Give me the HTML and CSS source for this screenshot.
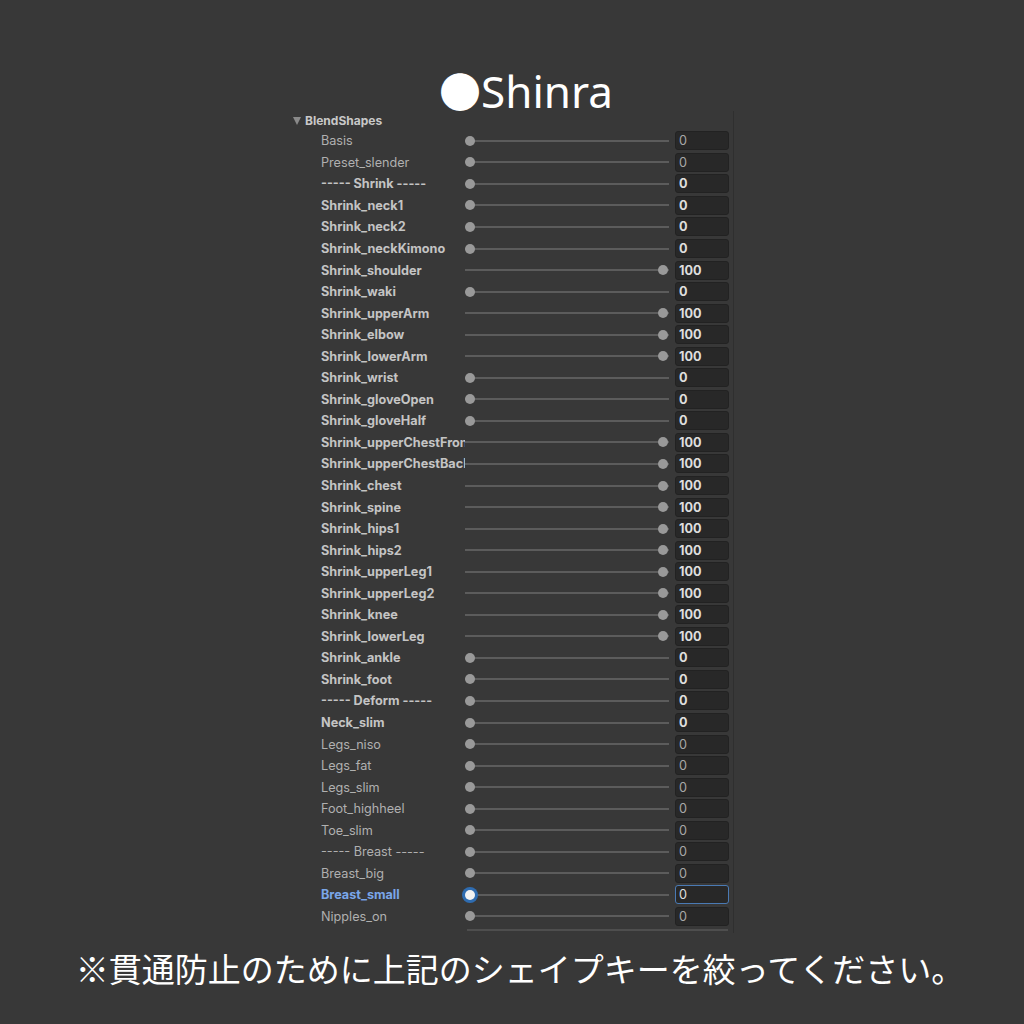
FILE: index.html
```html
<!DOCTYPE html>
<html lang="ja">
<head>
    <meta charset="UTF-8">
    <title>Shinra BlendShapes</title>
    <link rel="stylesheet" href="styles.css">
</head>
<body>
    <h1 class="title"><span class="dot">●</span>Shinra</h1>

    <div class="inspector">
        <div class="foldout"><span class="arrow"></span>BlendShapes</div>

        <div class="row"><span class="name">Basis</span><span class="slider"><span class="thumb"></span></span><span class="field">0</span></div>
        <div class="row"><span class="name">Preset_slender</span><span class="slider"><span class="thumb"></span></span><span class="field">0</span></div>
        <div class="row bold"><span class="name">----- Shrink -----</span><span class="slider"><span class="thumb"></span></span><span class="field">0</span></div>
        <div class="row bold"><span class="name">Shrink_neck1</span><span class="slider"><span class="thumb"></span></span><span class="field">0</span></div>
        <div class="row bold"><span class="name">Shrink_neck2</span><span class="slider"><span class="thumb"></span></span><span class="field">0</span></div>
        <div class="row bold"><span class="name">Shrink_neckKimono</span><span class="slider"><span class="thumb"></span></span><span class="field">0</span></div>
        <div class="row bold"><span class="name">Shrink_shoulder</span><span class="slider max"><span class="thumb"></span></span><span class="field">100</span></div>
        <div class="row bold"><span class="name">Shrink_waki</span><span class="slider"><span class="thumb"></span></span><span class="field">0</span></div>
        <div class="row bold"><span class="name">Shrink_upperArm</span><span class="slider max"><span class="thumb"></span></span><span class="field">100</span></div>
        <div class="row bold"><span class="name">Shrink_elbow</span><span class="slider max"><span class="thumb"></span></span><span class="field">100</span></div>
        <div class="row bold"><span class="name">Shrink_lowerArm</span><span class="slider max"><span class="thumb"></span></span><span class="field">100</span></div>
        <div class="row bold"><span class="name">Shrink_wrist</span><span class="slider"><span class="thumb"></span></span><span class="field">0</span></div>
        <div class="row bold"><span class="name">Shrink_gloveOpen</span><span class="slider"><span class="thumb"></span></span><span class="field">0</span></div>
        <div class="row bold"><span class="name">Shrink_gloveHalf</span><span class="slider"><span class="thumb"></span></span><span class="field">0</span></div>
        <div class="row bold"><span class="name">Shrink_upperChestFront</span><span class="slider max"><span class="thumb"></span></span><span class="field">100</span></div>
        <div class="row bold"><span class="name">Shrink_upperChestBack</span><span class="slider max"><span class="thumb"></span></span><span class="field">100</span></div>
        <div class="row bold"><span class="name">Shrink_chest</span><span class="slider max"><span class="thumb"></span></span><span class="field">100</span></div>
        <div class="row bold"><span class="name">Shrink_spine</span><span class="slider max"><span class="thumb"></span></span><span class="field">100</span></div>
        <div class="row bold"><span class="name">Shrink_hips1</span><span class="slider max"><span class="thumb"></span></span><span class="field">100</span></div>
        <div class="row bold"><span class="name">Shrink_hips2</span><span class="slider max"><span class="thumb"></span></span><span class="field">100</span></div>
        <div class="row bold"><span class="name">Shrink_upperLeg1</span><span class="slider max"><span class="thumb"></span></span><span class="field">100</span></div>
        <div class="row bold"><span class="name">Shrink_upperLeg2</span><span class="slider max"><span class="thumb"></span></span><span class="field">100</span></div>
        <div class="row bold"><span class="name">Shrink_knee</span><span class="slider max"><span class="thumb"></span></span><span class="field">100</span></div>
        <div class="row bold"><span class="name">Shrink_lowerLeg</span><span class="slider max"><span class="thumb"></span></span><span class="field">100</span></div>
        <div class="row bold"><span class="name">Shrink_ankle</span><span class="slider"><span class="thumb"></span></span><span class="field">0</span></div>
        <div class="row bold"><span class="name">Shrink_foot</span><span class="slider"><span class="thumb"></span></span><span class="field">0</span></div>
        <div class="row bold"><span class="name">----- Deform -----</span><span class="slider"><span class="thumb"></span></span><span class="field">0</span></div>
        <div class="row bold"><span class="name">Neck_slim</span><span class="slider"><span class="thumb"></span></span><span class="field">0</span></div>
        <div class="row"><span class="name">Legs_niso</span><span class="slider"><span class="thumb"></span></span><span class="field">0</span></div>
        <div class="row"><span class="name">Legs_fat</span><span class="slider"><span class="thumb"></span></span><span class="field">0</span></div>
        <div class="row"><span class="name">Legs_slim</span><span class="slider"><span class="thumb"></span></span><span class="field">0</span></div>
        <div class="row"><span class="name">Foot_highheel</span><span class="slider"><span class="thumb"></span></span><span class="field">0</span></div>
        <div class="row"><span class="name">Toe_slim</span><span class="slider"><span class="thumb"></span></span><span class="field">0</span></div>
        <div class="row"><span class="name">----- Breast -----</span><span class="slider"><span class="thumb"></span></span><span class="field">0</span></div>
        <div class="row"><span class="name">Breast_big</span><span class="slider"><span class="thumb"></span></span><span class="field">0</span></div>
        <div class="row focus"><span class="name">Breast_small</span><span class="slider"><span class="thumb"></span></span><span class="field">0</span></div>
        <div class="row"><span class="name">Nipples_on</span><span class="slider"><span class="thumb"></span></span><span class="field">0</span></div>

        <div class="rule"></div>
    </div>

    <p class="note">※貫通防止のために上記のシェイプキーを絞ってください。</p>
</body>
</html>
```

FILE: styles.css
```css
body { margin: 0; background: #383838; font-family: Inter, "Noto Sans", sans-serif; }
.title { margin: 70px 0 0; padding-left: 28px; height: 41px; line-height: 40px; text-align: center; font-family: "Noto Sans", sans-serif; font-weight: normal; font-size: 44px; color: #fff; }
.title .dot { font-family: "Noto Sans CJK JP", sans-serif; font-size: 42px; }

.inspector { width: 443px; margin: 0 auto; border-right: 1px solid #2f2f2f; padding-bottom: 2px; }
.foldout { display: flex; align-items: center; height: 19px; padding-left: 3px; font-size: 12px; font-weight: bold; color: #c8c8c8; }
.arrow { width: 0; height: 0; margin-right: 4px; border-left: 4.5px solid transparent; border-right: 4.5px solid transparent; border-top: 8px solid #8a8a8a; }

.row { display: flex; align-items: center; height: 21.56px; padding-left: 31px; font-size: 12.65px; color: #b0b0b0; }
.row.bold { font-weight: bold; color: #c4c4c4; }
.name { width: 144px; flex: none; white-space: pre; overflow: hidden; }

.slider { position: relative; width: 204px; height: 2px; flex: none; background: #5c5c5c; }
.thumb { position: absolute; left: 0; top: -4px; width: 10px; height: 10px; border-radius: 50%; background: #999; }
.slider.max .thumb { left: 193px; }

.field { box-sizing: border-box; width: 54px; height: 19px; margin-left: 6px; padding-left: 3px; line-height: 18px; border: 1px solid #222; border-radius: 3px; background: #282828; color: #a8a8a8; font-weight: normal; }
.row.bold .field { color: #dedede; font-weight: bold; }

.row.focus .name { color: #7aa6e8; font-weight: bold; }
.row.focus .thumb { background: #f2f2f2; box-shadow: 0 0 0 3px #2f6cb0; }
.row.focus .field { border-color: #4a7ab4; color: #e0e0e0; }

.rule { height: 2px; margin: 2px 5px 0 177px; background: #4e4e4e; }

.note { margin: 15px 0 0; padding-left: 16px; line-height: 40px; text-align: center; font-family: "Noto Sans CJK JP", sans-serif; font-size: 33px; color: #fff; }
```
